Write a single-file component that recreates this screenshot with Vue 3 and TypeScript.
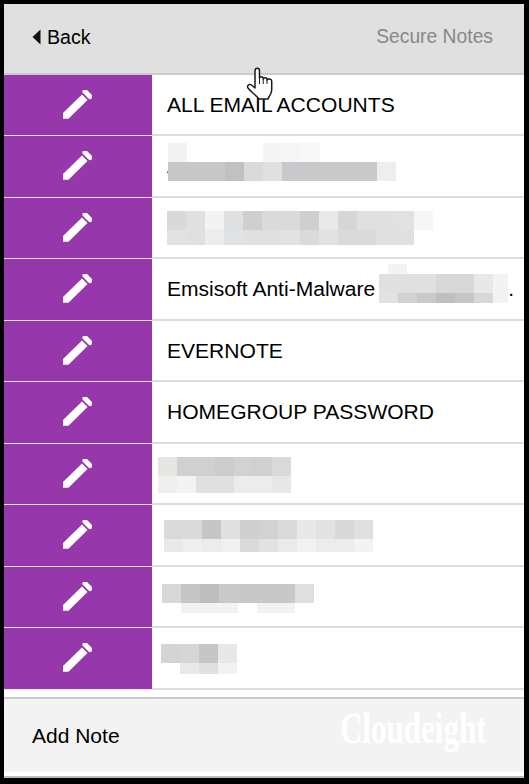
<template>
  <div class="phone">
    <header class="top-bar">
      <a class="back">
        <svg class="back-arrow" viewBox="0 0 9 16" width="9" height="16">
          <path d="M8.5 0.5V15.5L0.5 8Z" fill="#111" />
        </svg>
        Back
      </a>
      <span class="title">Secure Notes</span>
    </header>

    <ul class="notes">
      <li v-for="(note, i) in notes" :key="i" class="note">
        <div class="edit">
          <svg viewBox="0 0 30 30" width="30" height="30">
            <path d="M1 23L20 4.5L25.5 10L6.5 28.8H1Z" fill="#fff" />
            <path d="M23 1.5L28 6.5" stroke="#fff" stroke-width="5" stroke-linecap="round" />
          </svg>
        </div>
        <div class="label">
          <template v-if="note.hidden">
            <span>{{ note.text }}</span>
            <span class="inline-gap" />
            <span>{{ note.tail }}</span>
          </template>
          <template v-else>{{ note.text }}</template>
        </div>
        <div
          v-if="note.mosaic"
          class="mosaic"
          :style="{ left: note.mosaic.x - 4 + 'px', top: note.mosaic.y - (74.5 + 61.5 * i) + 'px', width: note.mosaic.w + 'px' }"
        >
          <div
            v-for="(line, j) in note.mosaic.lines"
            :key="j"
            class="mosaic-line"
            :style="{ height: line.h + 'px', marginLeft: (line.indent || 0) + 'px' }"
          >
            <span
              v-for="(c, k) in line.cells"
              :key="k"
              class="cell"
              :style="{ background: c || 'transparent' }"
            />
          </div>
        </div>
      </li>
    </ul>

    <footer class="bottom-bar">
      <span class="add">Add Note</span>
      <span class="watermark">Cloudeight</span>
    </footer>

    <svg class="hand" viewBox="0 0 27 33" width="27" height="33">
      <path
        d="M9 3.5C9 0.5 13.5 0.5 13.5 3.5V11C14 9.3 17 9.3 17.2 11V12C18 10.2 21 10.4 21 12.2V13C22 11.4 25.7 11.8 25.7 14V23C25.7 27 23 29 22 32H13C10 28 5 25 2 21C0.5 18.5 3.5 16.5 5.5 18L9 21Z"
        fill="#fff"
        stroke="#1a1a1a"
        stroke-width="1.5"
        stroke-linejoin="round"
      />
      <path d="M13.5 11V17M17.2 12V17M21 13V17" stroke="#1a1a1a" stroke-width="1" fill="none" />
    </svg>
  </div>
</template>

<script setup lang="ts">
interface Line {
  h: number
  indent?: number
  cells: (string | null)[]
}

interface Mosaic {
  x: number
  y: number
  w: number
  lines: Line[]
}

interface Note {
  text: string
  tail?: string
  hidden?: boolean
  mosaic?: Mosaic
}

const notes: Note[] = [
  { text: 'ALL EMAIL ACCOUNTS' },
  {
    text: 'A',
    mosaic: {
      x: 168,
      y: 143,
      w: 228,
      lines: [
        { h: 19, cells: ['#f3f3f3', null, null, null, null, '#f5f5f5', '#f6f6f6', '#f7f8f7'] },
        {
          h: 19,
          cells: ['#c8c8c8', '#c8c8c6', '#c8c8c8', '#c0c1c3', '#dadada', '#e0e0e0', '#c8c9cc', '#c9c9c9', '#c9c9c9', '#c9c9c9', '#c9c9c9', '#edeef0']
        }
      ]
    }
  },
  {
    text: '',
    mosaic: {
      x: 167,
      y: 211,
      w: 266,
      lines: [
        {
          h: 19,
          cells: ['#d9d9d9', '#e0e0e0', '#f3f3f3', '#e0e0e0', '#cfcfcf', '#dadada', '#dadada', '#cfcfcf', '#e9e9e9', '#d6d6d6', '#e0e0e0', '#e0e0e0', '#e2e1df', '#f6f6f8']
        },
        {
          h: 15,
          cells: ['#e2e2e0', '#e0e0e0', '#ececec', '#e0e3e6', '#e0e0e0', '#e0e0e0', '#e2e2df', '#dadada', '#e2e2e2', '#dadada', '#dadada', '#e0e0e0', '#e0e0e0']
        }
      ]
    }
  },
  {
    text: 'Emsisoft Anti-Malware',
    tail: '.',
    hidden: true,
    mosaic: {
      x: 379,
      y: 264,
      w: 129,
      lines: [
        { h: 10, indent: 9, cells: ['#f3f3f3'] },
        { h: 19, cells: ['#e0e0e0', '#e0e0e0', '#e0e0e0', '#d8d8d8', '#d8d8d8', '#e8e8e8', '#f3f3f3'] },
        { h: 10, cells: ['#e2e2e2', '#d2d2d2', '#c9c9c9', '#bfbfbf', '#c6c6c6', '#d8d8d8', '#f3f3f3'] }
      ]
    }
  },
  { text: 'EVERNOTE' },
  { text: 'HOMEGROUP PASSWORD' },
  {
    text: '',
    mosaic: {
      x: 158,
      y: 457,
      w: 133,
      lines: [
        { h: 19, cells: ['#e5e5e3', '#d0d0d0', '#d0d0d0', '#cdccca', '#d2d2d2', '#d0d0d0', '#dadada'] },
        { h: 17, cells: ['#efefed', '#f3f3f3', '#e0e0e0', '#e0e0e0', '#ececec', '#ececec', '#e6e7e9'] }
      ]
    }
  },
  {
    text: '',
    mosaic: {
      x: 164,
      y: 520,
      w: 209,
      lines: [
        { h: 19, cells: ['#dadada', '#dadada', '#c6c6c6', '#e0e0e0', '#d0cfcd', '#d2d2d2', '#dadada', '#e8e8e8', '#e2e2e2', '#d8d8d8', '#e0e0e0'] },
        { h: 13, cells: ['#e9e9e9', '#f0efed', '#ececec', '#eff1f0', '#dadada', '#e2e2e2', '#eaeaea', '#f2f2f2', '#ececec', '#ececec', '#f3f3f3'] }
      ]
    }
  },
  {
    text: '',
    mosaic: {
      x: 162,
      y: 584,
      w: 152,
      lines: [
        { h: 19, cells: ['#d8d8d8', '#c6c6c6', '#bebebe', '#c8c9cb', '#c8c8c8', '#c8c8c8', '#c8c8c8', '#dedfe1'] },
        { h: 10, cells: [null, '#f2f2f2', '#f2f2f2', '#f2f2f2', null, '#f2f2f2', '#f2f2f2'] }
      ]
    }
  },
  {
    text: '',
    mosaic: {
      x: 161,
      y: 644,
      w: 76,
      lines: [
        { h: 19, cells: ['#d5d3d3', '#d6d6d4', '#c6c6c6', '#e8e8e8'] },
        { h: 11, cells: [null, '#e9e9e9', '#e0e0e0', '#f2f2f2'] }
      ]
    }
  }
]
</script>

<style scoped>
.phone {
  position: relative;
  box-sizing: border-box;
  width: 529px;
  height: 784px;
  padding: 4px 5px 6px 4px;
  display: flex;
  flex-direction: column;
  background: #000;
  font-family: "Liberation Sans", Arial, sans-serif;
  overflow: hidden;
}

.top-bar {
  flex: none;
  box-sizing: border-box;
  height: 70.5px;
  padding: 0 31px 2px 28px;
  display: flex;
  align-items: center;
  justify-content: space-between;
  background: #e0e0e0;
  border-bottom: 2px solid #cbcbcb;
}

.back {
  display: flex;
  align-items: center;
  gap: 6px;
  font-size: 19.6px;
  color: #000;
}

.title {
  font-size: 19.3px;
  color: #888;
}

.notes {
  flex: none;
  margin: 0;
  padding: 0 0 7.5px;
  list-style: none;
  background: #fff;
}

.note {
  position: relative;
  height: 61.5px;
  display: flex;
}

.edit {
  flex: none;
  box-sizing: border-box;
  width: 148px;
  display: flex;
  align-items: center;
  justify-content: center;
  padding-right: 2px;
  background: #9637ab;
  border-bottom: 1px solid #efe3f2;
}

.label {
  flex: 1;
  box-sizing: border-box;
  display: flex;
  align-items: center;
  padding: 1px 0 0 15px;
  font-size: 21.05px;
  color: #000;
  white-space: pre;
  border-bottom: 2px solid #dcdcdc;
}

.inline-gap {
  flex: none;
  width: 133px;
}

.mosaic {
  position: absolute;
  overflow: hidden;
}

.mosaic-line {
  display: flex;
}

.cell {
  flex: none;
  width: 19px;
}

.bottom-bar {
  flex: none;
  box-sizing: border-box;
  height: 75px;
  padding: 0 37px 0 28px;
  display: flex;
  align-items: center;
  justify-content: space-between;
  background: #f3f3f3;
  border-top: 2px solid #c9c9c9;
}

.add {
  font-size: 21px;
  color: #000;
}

.watermark {
  display: inline-block;
  font-family: "Liberation Serif", serif;
  font-size: 45px;
  line-height: 1;
  font-weight: 700;
  color: #fff;
  transform: translateY(-7px) scaleX(0.69);
  transform-origin: right center;
}

.phone::after {
  content: "";
  flex: none;
  background: #fff;
  border-bottom: 2px solid #bdbdbd;
  box-sizing: content-box;
  height: 4px;
}

.hand {
  position: absolute;
  left: 246px;
  top: 67px;
}

.back-arrow {
  display: block;
}
</style>

<style>
html,
body {
  margin: 0;
  background: #000;
}
</style>
